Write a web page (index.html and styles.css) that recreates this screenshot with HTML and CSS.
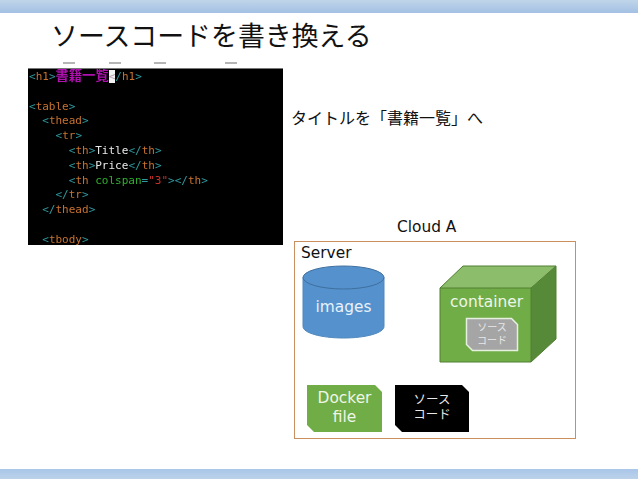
FILE: index.html
```html
<!DOCTYPE html>
<html lang="ja">
<head>
<meta charset="utf-8">
<title>ソースコードを書き換える</title>
<link rel="stylesheet" href="styles.css">
</head>
<body>
<div class="slide">
  <div class="bar bar-top"></div>
  <h1 class="title">ソースコードを書き換える</h1>
  <div class="content">
    <div class="shot">
      <div class="ruler"><i></i><i></i><i></i><i></i></div>
      <pre class="code"><span class="t">&lt;</span><span class="o">h1</span><span class="t">&gt;</span><span class="m">書籍一覧</span><span class="cur">&lt;</span><span class="t">/</span><span class="o">h1</span><span class="t">&gt;</span>

<span class="t">&lt;</span><span class="o">table</span><span class="t">&gt;</span>
  <span class="t">&lt;</span><span class="o">thead</span><span class="t">&gt;</span>
    <span class="t">&lt;</span><span class="o">tr</span><span class="t">&gt;</span>
      <span class="t">&lt;</span><span class="o">th</span><span class="t">&gt;</span>Title<span class="t">&lt;/</span><span class="o">th</span><span class="t">&gt;</span>
      <span class="t">&lt;</span><span class="o">th</span><span class="t">&gt;</span>Price<span class="t">&lt;/</span><span class="o">th</span><span class="t">&gt;</span>
      <span class="t">&lt;</span><span class="o">th</span> <span class="g">colspan</span><span class="t">=</span><span class="r">"3"</span><span class="t">&gt;&lt;/</span><span class="o">th</span><span class="t">&gt;</span>
    <span class="t">&lt;/</span><span class="o">tr</span><span class="t">&gt;</span>
  <span class="t">&lt;/</span><span class="o">thead</span><span class="t">&gt;</span>

  <span class="t">&lt;</span><span class="o">tbody</span><span class="t">&gt;</span></pre>
    </div>
    <div class="side">
      <p class="note">タイトルを「書籍一覧」へ</p>
      <p class="cloud-label">Cloud A</p>
      <div class="cloud">
        <span class="server">Server</span>
        <svg class="art" width="282" height="198" viewBox="0 0 282 198">
          <path d="M9 36.500V85.500C9 91.900 27 97 49.500 97S90 91.900 90 85.500V36.500z" fill="#5592cd" stroke="#4f87bd" stroke-width="1"/>
          <ellipse cx="49.500" cy="36.500" rx="40.500" ry="11.500" fill="#5592cd" stroke="#3f6f9f" stroke-width="1"/>
          <path d="M146 121V47h91v74z" fill="#70ad47"/>
          <path d="M146 47l23-22h93l-25 22z" fill="#8cbd6a"/>
          <path d="M237 47l25-22v73l-25 23z" fill="#578a38"/>
          <path d="M146 121V47l23-22h93v73l-25 23zM146 47h91l25-22M237 47v74" fill="none" stroke="#507e32" stroke-width="1"/>
          <path d="M172.500 77.500h45l6 6v26h-45l-6-6z" fill="#a5a5a5" stroke="#e6f0de" stroke-width="1.500"/>
          <path d="M13 144h68l7 7v40H20l-7-7z" fill="#70ad47"/>
          <path d="M101 144h67l7 7v40h-67l-7-7z" fill="#000"/>
        </svg>
        <span class="lbl images">images</span>
        <span class="lbl boxname">container</span>
        <span class="lbl mini">ソース<br>コード</span>
        <span class="lbl docker">Docker<br>file</span>
        <span class="lbl source">ソース<br>コード</span>
      </div>
    </div>
  </div>
  <div class="bar bar-bottom"></div>
</div>
</body>
</html>
```
FILE: styles.css
```css
* { box-sizing: border-box; }
html, body { margin: 0; padding: 0; background: #fff; }
.slide {
  width: 638px;
  height: 479px;
  display: flex;
  flex-direction: column;
  overflow: hidden;
  font-family: "DejaVu Sans", "Noto Sans CJK JP", sans-serif;
  color: #111;
}
.bar { background: linear-gradient(#c0d5ea, #a3c0e3); flex: none; }
.bar-top { height: 13px; }
.bar-bottom { height: 10px; margin-top: auto; background: linear-gradient(#a9c6e8, #bcd2ea); }
.title {
  margin: 4px 0 0 51px;
  font-family: "Noto Sans CJK JP", sans-serif;
  font-size: 26.900px;
  font-weight: 400;
  line-height: 36px;
  white-space: nowrap;
}
.content { display: flex; margin: 9px 0 0 28px; }
.shot { width: 255px; flex: none; }
.ruler {
  height: 6px;
  display: flex;
  padding-left: 35px;
  gap: 33.500px;
  background: #fff;
}
.ruler i { width: 12px; height: 2px; background: #b5b5b5; }
.ruler i:last-child { margin-left: 25px; }
.code {
  margin: 0;
  height: 177px;
  padding: 1px 0 0 1px;
  overflow: hidden;
  background: #000;
  border-top: 1px solid #777;
  color: #e8e8e8;
  font-family: "DejaVu Sans Mono", "Noto Sans CJK JP", monospace;
  font-size: 11px;
  line-height: 14.800px;
  filter: blur(0.5px);
}
.t { color: #2f9aa0; }
.o { color: #c8722f; }
.m { color: #b010b0; font-weight: 700; font-size: 13.300px; line-height: 12px; }
.g { color: #2fb02f; }
.r { color: #c8302a; }
.cur { background: #f2f2f2; color: #b9a0b0; }
.side { width: 295px; margin-left: 8px; flex: none; }
.note {
  margin: 43px 0 0;
  font-family: "Noto Sans CJK JP", sans-serif;
  font-size: 16px;
  line-height: 24px;
  white-space: nowrap;
}
.cloud-label {
  margin: 88px 0 0 106px;
  font-size: 15.400px;
  line-height: 20px;
}
.cloud {
  position: relative;
  width: 282px;
  height: 198px;
  margin: 4px 0 0 3px;
  border: 1px solid #c98f5e;
}
.art { position: absolute; left: -1px; top: -1px; }
.server { position: absolute; left: 6px; top: 1px; font-size: 15.400px; line-height: 20px; }
.lbl {
  position: absolute;
  color: #eef6e8;
  text-align: center;
  white-space: nowrap;
}
.images { left: 8px; width: 81px; top: 55px; font-size: 15.400px; line-height: 20px; color: #e8f1f9; }
.boxname { left: 146px; width: 91px; top: 50px; font-size: 15.400px; line-height: 20px; }
.mini {
  left: 171px; width: 52px; top: 78px;
  font-family: "Noto Sans CJK JP", sans-serif;
  font-size: 10px; line-height: 13px; color: #e8e8e8;
}
.docker { left: 12px; width: 75px; top: 147px; font-size: 15.400px; line-height: 19px; }
.source {
  left: 100px; width: 74px; top: 150px;
  font-family: "Noto Sans CJK JP", sans-serif;
  font-size: 12.500px; line-height: 14.500px; color: #e8e8e8;
}
```
